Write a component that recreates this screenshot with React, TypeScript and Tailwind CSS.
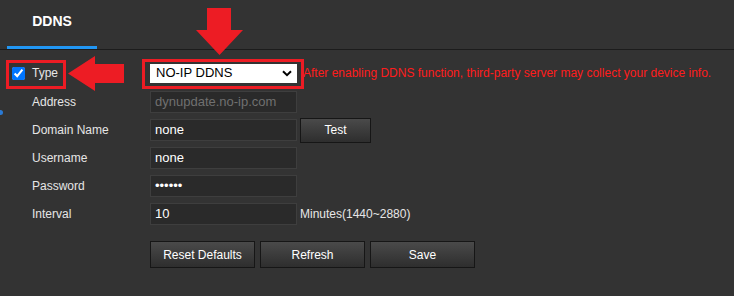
import React from 'react';

const FONT = { fontFamily: '"Liberation Sans", Arial, sans-serif' };

const ROWS = [
  { label: 'Address', value: 'dynupdate.no-ip.com', muted: true },
  { label: 'Domain Name', value: 'none', test: true },
  { label: 'Username', value: 'none' },
  { label: 'Password', value: '••••••' },
  { label: 'Interval', value: '10', unit: 'Minutes(1440~2880)' },
];

function Btn({ children, className = '' }: { children: React.ReactNode; className?: string }) {
  return (
    <div
      className={`flex items-center justify-center border border-[#161616] bg-gradient-to-b from-[#4a4a4a] to-[#2e2e2e] text-white text-[12px] ${className}`}
    >
      {children}
    </div>
  );
}

export default function App() {
  return (
    <div className="relative w-[734px] h-[296px] bg-[#333333] overflow-hidden" style={FONT}>
      {/* Header tab */}
      <div className="h-[50px] border-b border-[#1c1c1c] flex items-end pl-[7px]">
        <div className="w-[90px] h-[49px] flex flex-col">
          <div className="flex-1 flex items-center justify-center text-white font-bold text-[14px] pb-[4px]">DDNS</div>
          <div className="h-[3px] bg-[#2196f3]" />
        </div>
      </div>

      {/* Form */}
      <div className="pt-[12px]">
        {/* Type row */}
        <div className="flex items-center h-[22px]">
          <div className="w-[150px] flex items-center pl-[12px]">
            <input type="checkbox" checked readOnly className="w-[13px] h-[13px] m-0" />
            <span className="ml-[7px] text-[12px] text-[#e6e6e6]">Type</span>
          </div>
          <div className="w-[147px] h-[19px] bg-white flex items-center justify-between pl-[6px] pr-[5px] text-[13px] text-black">
            <span>NO-IP DDNS</span>
            <svg width="10" height="7" viewBox="0 0 10 7">
              <path d="M1 1.2 L5 5.2 L9 1.2" fill="none" stroke="#000" strokeWidth="2" />
            </svg>
          </div>
          <span className="ml-[6px] text-[12px] text-[#ff1c1c]">
            After enabling DDNS function, third-party server may collect your device info.
          </span>
        </div>

        {/* Field rows */}
        <div className="flex flex-col gap-[6px] mt-[7px]">
          {ROWS.map((r) => (
            <div key={r.label} className="flex items-center h-[22px]">
              <span className="w-[150px] pl-[32px] text-[12px] text-[#e6e6e6]">{r.label}</span>
              <div
                className={`w-[147px] h-[22px] bg-[#2a2a2a] border border-[#3e3e3e] flex items-center pl-[4px] text-[13px] ${
                  r.muted ? 'text-[#707070]' : 'text-white'
                }`}
              >
                {r.value}
              </div>
              {r.test && <Btn className="ml-[3px] w-[71px] h-[25px]">Test</Btn>}
              {r.unit && <span className="ml-[3px] text-[12px] text-[#e6e6e6]">{r.unit}</span>}
            </div>
          ))}
        </div>

        {/* Buttons */}
        <div className="flex gap-[5px] pl-[150px] mt-[16px]">
          <Btn className="w-[105px] h-[27px]">Reset Defaults</Btn>
          <Btn className="w-[105px] h-[27px]">Refresh</Btn>
          <Btn className="w-[105px] h-[27px]">Save</Btn>
        </div>
      </div>

      {/* Annotations */}
      <div className="absolute left-[6px] top-[60px] w-[60px] h-[29px] border-[3px] border-[#ed1c24]" />
      <div className="absolute left-[142px] top-[59px] w-[162px] h-[30px] border-[3px] border-[#ed1c24]" />
      <svg className="absolute left-[68px] top-[56px]" width="57" height="36" viewBox="0 0 57 36">
        <polygon points="0,17.5 27,0 27,8 56,8 56,27 27,27 27,35" fill="#ed1c24" />
      </svg>
      <svg className="absolute left-[196px] top-[8px]" width="48" height="48" viewBox="0 0 48 48">
        <polygon points="11,0 35,0 35,22 47,22 23.5,47 0,22 11,22" fill="#ed1c24" />
      </svg>
      <div className="absolute -left-[2px] top-[110px] w-[5px] h-[5px] rounded-full bg-[#2a7ad5]" />
    </div>
  );
}
